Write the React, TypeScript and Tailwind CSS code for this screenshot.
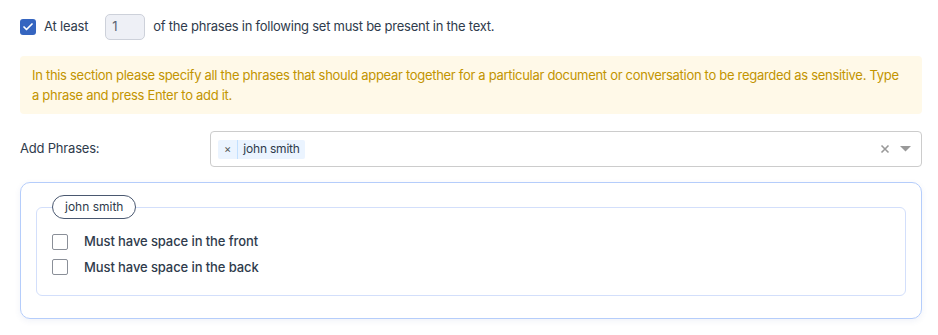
import { Check } from 'lucide-react'

const font = { fontFamily: 'Inter, "Noto Sans", sans-serif' }

function Box({ checked = false }: { checked?: boolean }) {
  return checked ? (
    <span className="flex h-4 w-4 items-center justify-center rounded-[3px] bg-[#3565c0]">
      <Check className="h-3 w-3 text-white" strokeWidth={3.5} />
    </span>
  ) : (
    <span className="block h-4 w-4 rounded-[2px] border border-[#8a8f98] bg-white" />
  )
}

export default function App() {
  return (
    <div className="min-h-[335px] w-[938px] bg-white pl-5 pr-4 pt-[14px] text-[13px] text-[#2f3b4c]" style={font}>
      {/* Minimum match row */}
      <div className="flex h-[26px] items-center">
        <Box checked />
        <span className="ml-2 tracking-[-0.2px]">At least</span>
        <div className="ml-[17px] flex h-[26px] w-[40px] items-center rounded-[5px] border border-[#cdd1da] bg-[#eef0f6] pl-[6px] text-[#5a6272]">
          1
        </div>
        <span className="ml-2 tracking-[-0.25px]">of the phrases in following set must be present in the text.</span>
      </div>

      {/* Notice */}
      <div className="mt-4 rounded-[4px] bg-[#fff9e8] py-[9px] pl-3 pr-[18px] text-[13px] leading-[20px] tracking-[-0.3px] text-[#c29400]">
        In this section please specify all the phrases that should appear together for a particular document or conversation to be regarded as sensitive. Type a phrase and press Enter to add it.
      </div>

      {/* Phrase select */}
      <div className="mt-[17px] flex items-center">
        <label className="w-[190px] tracking-[-0.2px]">Add Phrases:</label>
        <div className="flex h-[36px] flex-1 items-center rounded-[4px] border border-[#cccccc] bg-white pl-[7px] pr-[10px]">
          <div className="flex h-[19px] items-center rounded-[2px] bg-[#ebf4ff] text-[12px] text-[#2f3b4c]">
            <span className="px-[6px] text-[11px] text-[#555]">×</span>
            <span className="h-full w-px bg-[#c2e0ff]" />
            <span className="pl-[5px] pr-[5px] tracking-[-0.2px]">john smith</span>
          </div>
          <div className="flex-1" />
          <svg width="10" height="10" viewBox="0 0 10 10" className="mr-[10px]">
            <path d="M1.5 1.5 L8.5 8.5 M8.5 1.5 L1.5 8.5" stroke="#999" strokeWidth="1.6" />
          </svg>
          <svg width="11" height="6" viewBox="0 0 11 6">
            <path d="M0 0 L11 0 L5.5 5.5 Z" fill="#999" />
          </svg>
        </div>
      </div>

      {/* Phrase card */}
      <div className="mt-[15px] rounded-[10px] border border-[#b5cdfb] px-[15px] pb-[22px] pt-[12px] shadow-[0_2px_6px_rgba(60,90,160,0.08)]">
        <fieldset className="rounded-[6px] border border-[#d3dffb] px-[15px] pb-[18px]">
          <legend className="flex h-[24px] items-center rounded-full border border-[#4a5870] px-3 text-[12px] text-[#2f3b4c]">
            john smith
          </legend>
          <div className="mt-[13px] flex flex-col gap-[6px]">
            <label className="flex items-center">
              <Box />
              <span className="ml-4 font-medium tracking-[-0.1px]">Must have space in the front</span>
            </label>
            <label className="flex items-center">
              <Box />
              <span className="ml-4 font-medium tracking-[-0.1px]">Must have space in the back</span>
            </label>
          </div>
        </fieldset>
      </div>
    </div>
  )
}
